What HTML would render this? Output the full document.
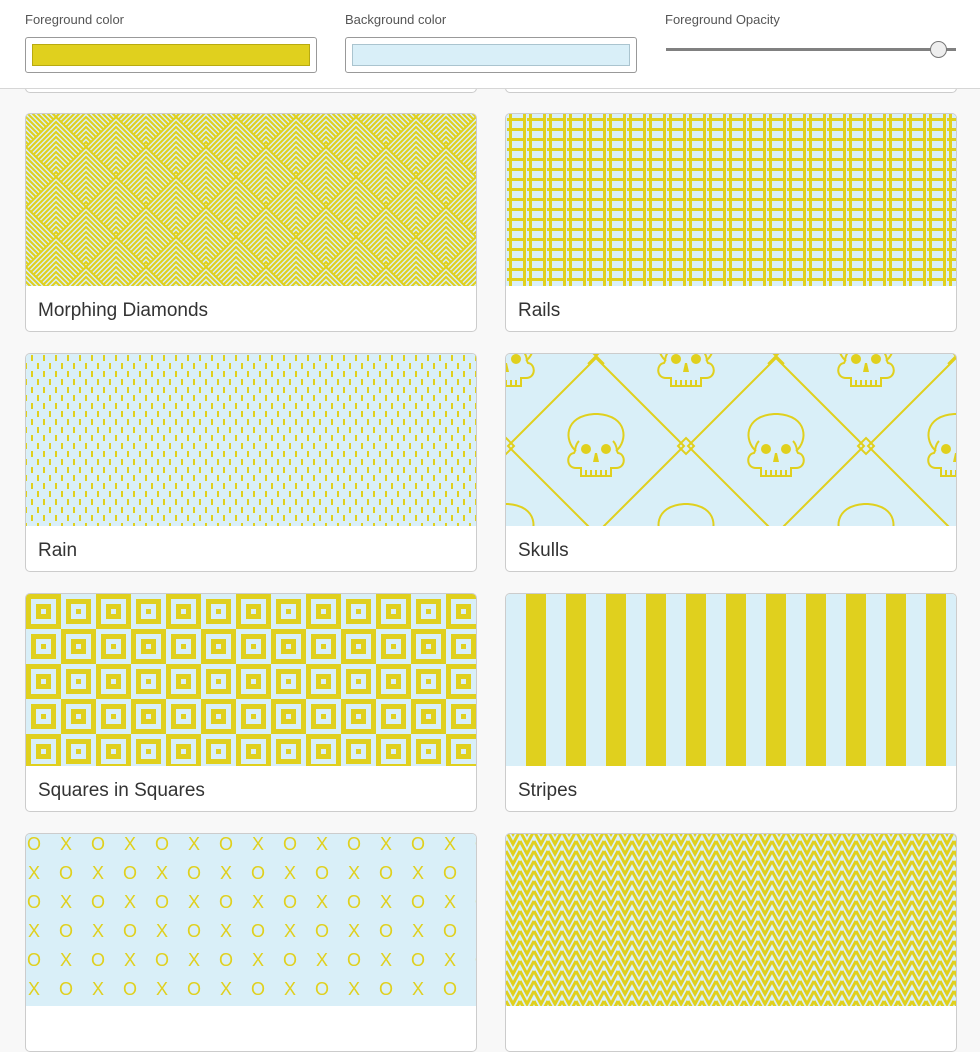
<!DOCTYPE html>
<html><head><meta charset="utf-8">
<style>
*{box-sizing:border-box;margin:0;padding:0}
body{width:980px;height:899px;overflow:hidden;background:#f8f8f8;font-family:"Liberation Sans",sans-serif;position:relative}
.hdr{position:absolute;left:0;top:0;width:980px;height:89px;background:#fff;border-bottom:1px solid #d6d6d6;z-index:5}
.lbl{position:absolute;top:12px;font-size:13px;color:#555}
.box{position:absolute;top:37px;width:292px;height:36px;border:1px solid #999;border-radius:3px;background:#fff}
.box div{position:absolute;left:6px;top:6px;right:6px;bottom:6px}
.card{position:absolute;width:452px;height:219px;border:1px solid #ccc;border-radius:5px;background:#fff;overflow:hidden}
.card svg{display:block;width:450px;height:172px}
.card .t{position:absolute;left:12px;top:186px;font-size:19px;color:#333}
</style></head><body>
<div class="hdr">
  <div class="lbl" style="left:25px">Foreground color</div>
  <div class="box" style="left:25px"><div style="background:#e0d01e;border:1px solid #b8aa10"></div></div>
  <div class="lbl" style="left:345px">Background color</div>
  <div class="box" style="left:345px"><div style="background:#d9eff8;border:1px solid #aac4cf"></div></div>
  <div class="lbl" style="left:665px">Foreground Opacity</div>
  <div style="position:absolute;left:666px;top:48px;width:290px;height:3px;background:#808080"></div>
  <div style="position:absolute;left:930px;top:41px;width:17px;height:17px;border-radius:50%;background:#eee;border:1px solid #777"></div>
</div>
<div class="card" style="left:25px;top:40px;height:53px"></div>
<div class="card" style="left:505px;top:40px;height:53px"></div>

<svg width="0" height="0" style="position:absolute">
<defs>
<g id="chev" fill="none" stroke="#e0d01e" stroke-width="2.1">
<polygon points="0,0 30,30 0,60 -30,30" fill="#d9eff8" stroke="none"/>
<path d="M-30,30 L0,0 L30,30 M-27.5,32.5 L0,5 L27.5,32.5 M-25,35 L0,10 L25,35 M-22.5,37.5 L0,15 L22.5,37.5 M-20,40 L0,20 L20,40 M-17.5,42.5 L0,25 L17.5,42.5 M-15,45 L0,30 L15,45 M-12.5,47.5 L0,35 L12.5,47.5 M-10,50 L0,40 L10,50 M-7.5,52.5 L0,45 L7.5,52.5 M-5,55 L0,50 L5,55 M-2.5,57.5 L0,55 L2.5,57.5"/>
</g>
<pattern id="pd" width="60" height="60" patternUnits="userSpaceOnUse" x="0" y="3">
<rect width="60" height="60" fill="#d9eff8"/>
<use href="#chev" x="0" y="-30"/><use href="#chev" x="60" y="-30"/>
<use href="#chev" x="30" y="0"/>
<use href="#chev" x="0" y="30"/><use href="#chev" x="60" y="30"/>
</pattern>
<pattern id="pr" width="20" height="10" patternUnits="userSpaceOnUse" x="0" y="0">
<rect width="20" height="10" fill="#d9eff8"/>
<rect x="3" y="0" width="3" height="10" fill="#e0d01e"/>
<rect x="17" y="0" width="3" height="10" fill="#e0d01e"/>
<rect x="1" y="4" width="20" height="3" fill="#e0d01e"/>
</pattern>
<pattern id="prain" width="12" height="16" patternUnits="userSpaceOnUse">
<rect width="12" height="16" fill="#d9eff8"/>
<rect x="5" y="1" width="2" height="6" fill="#e0d01e"/>
<rect x="11" y="9" width="2" height="6" fill="#e0d01e"/>
<rect x="-1" y="9" width="2" height="6" fill="#e0d01e"/>
</pattern>
<g id="skull" fill="none" stroke="#e0d01e" stroke-width="2">
<path d="M-20,5 C-32,-5 -32,-30 -2,-32 L2,-32 C32,-30 32,-5 20,5"/>
<path d="M-17,-5 C-22,0 -20,5 -22,7 C-30,8 -30,22 -20,22 L-15,22 L-15,30 L15,30 L15,22 L20,22 C30,22 30,8 22,7 C20,5 22,0 17,-5"/>
<path d="M-10,24 v6 M-5,24 v6 M0,24 v6 M5,24 v6 M10,24 v6"/>
<circle cx="-10" cy="3" r="5" fill="#e0d01e" stroke="none"/>
<circle cx="10" cy="3" r="5" fill="#e0d01e" stroke="none"/>
<path d="M-1,7 L1,7 L3,16 L-3,16Z" fill="#e0d01e" stroke="none"/>
</g>
<pattern id="psk" width="180" height="180" patternUnits="userSpaceOnUse" x="0" y="2">
<rect width="180" height="180" fill="#d9eff8"/>
<g fill="none" stroke="#e0d01e" stroke-width="2">
<path d="M90,2 L178,90 L90,178 L2,90 Z"/>
<path d="M180,82 L188,90 L180,98 L172,90Z M0,82 L8,90 L0,98 L-8,90Z M90,0 L98,8 M90,0 L82,8 M90,180 L98,172 M90,180 L82,172"/>
</g>
<use href="#skull" x="90" y="90"/>
<use href="#skull" x="0" y="0"/><use href="#skull" x="180" y="0"/>
<use href="#skull" x="0" y="180"/><use href="#skull" x="180" y="180"/>
</pattern>
<g id="sqA"><rect width="35" height="35" fill="#e0d01e"/><rect x="5" y="5" width="25" height="25" fill="#d9eff8"/><rect x="10" y="10" width="15" height="15" fill="#e0d01e"/><rect x="15" y="15" width="5" height="5" fill="#d9eff8"/></g>
<g id="sqB"><rect width="35" height="35" fill="#d9eff8"/><rect x="5" y="5" width="25" height="25" fill="#e0d01e"/><rect x="10" y="10" width="15" height="15" fill="#d9eff8"/><rect x="15" y="15" width="5" height="5" fill="#e0d01e"/></g>
<pattern id="psq" width="70" height="70" patternUnits="userSpaceOnUse">
<use href="#sqA"/><use href="#sqB" x="35"/><use href="#sqB" y="35"/><use href="#sqA" x="35" y="35"/>
</pattern>
<pattern id="pst" width="40" height="10" patternUnits="userSpaceOnUse">
<rect width="40" height="10" fill="#d9eff8"/><rect x="20" width="20" height="10" fill="#e0d01e"/>
</pattern>
<pattern id="pch" width="14" height="10" patternUnits="userSpaceOnUse">
<rect width="14" height="10" fill="#d9eff8"/>
<path d="M0,-3 L7,10 L14,-3 M0,7 L7,20 L14,7 M0,-13 L7,0 L14,-13" fill="none" stroke="#e0d01e" stroke-width="3"/>
</pattern>
<pattern id="pxo" width="64" height="58" patternUnits="userSpaceOnUse">
<rect width="64" height="58" fill="#d9eff8"/>
<g font-family="Liberation Sans, sans-serif" font-size="18" fill="#e0d01e" text-anchor="middle">
<text x="8" y="16">O</text><text x="40" y="16">X</text>
<text x="8" y="45">X</text><text x="40" y="45">O</text>
</g>
</pattern>
</defs></svg>

<div class="card" style="left:25px;top:113px"><svg><rect width="450" height="172" fill="url(#pd)"/></svg><div class="t">Morphing Diamonds</div></div>
<div class="card" style="left:505px;top:113px"><svg><rect width="450" height="172" fill="url(#pr)"/></svg><div class="t">Rails</div></div>
<div class="card" style="left:25px;top:353px"><svg><rect width="450" height="172" fill="url(#prain)"/></svg><div class="t">Rain</div></div>
<div class="card" style="left:505px;top:353px"><svg><rect width="450" height="172" fill="url(#psk)"/></svg><div class="t">Skulls</div></div>
<div class="card" style="left:25px;top:593px"><svg><rect width="450" height="172" fill="url(#psq)"/></svg><div class="t">Squares in Squares</div></div>
<div class="card" style="left:505px;top:593px"><svg><rect width="450" height="172" fill="url(#pst)"/></svg><div class="t">Stripes</div></div>
<div class="card" style="left:25px;top:833px"><svg><rect width="450" height="172" fill="url(#pxo)"/></svg></div>
<div class="card" style="left:505px;top:833px"><svg><rect width="450" height="172" fill="url(#pch)"/></svg></div>
</body></html>
